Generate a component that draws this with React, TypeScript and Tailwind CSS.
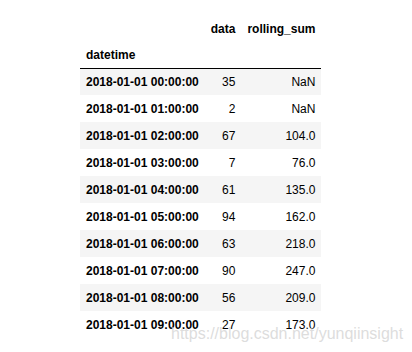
import React from 'react';

const rows: [string, string, string][] = [
  ['2018-01-01 00:00:00', '35', 'NaN'],
  ['2018-01-01 01:00:00', '2', 'NaN'],
  ['2018-01-01 02:00:00', '67', '104.0'],
  ['2018-01-01 03:00:00', '7', '76.0'],
  ['2018-01-01 04:00:00', '61', '135.0'],
  ['2018-01-01 05:00:00', '94', '162.0'],
  ['2018-01-01 06:00:00', '63', '218.0'],
  ['2018-01-01 07:00:00', '90', '247.0'],
  ['2018-01-01 08:00:00', '56', '209.0'],
  ['2018-01-01 09:00:00', '27', '173.0'],
];

const App: React.FC = () => {
  return (
    <div className="relative w-[412px] h-[352px] bg-white overflow-hidden font-['Liberation_Sans',Arial,sans-serif] text-black text-[12px]">
      <div className="pt-[15px] pl-[80px]">
        <table className="border-collapse">
          <thead className="border-b border-black">
            <tr className="h-[27px]">
              <th className="px-[6px]"></th>
              <th className="px-[6px] text-right font-bold">data</th>
              <th className="px-[6px] text-right font-bold">rolling_sum</th>
            </tr>
            <tr className="h-[26px]">
              <th className="px-[6px] text-left font-bold">datetime</th>
              <th className="px-[6px]"></th>
              <th className="px-[6px]"></th>
            </tr>
          </thead>
          <tbody>
            {rows.map(([dt, data, sum], i) => (
              <tr key={dt} className={i % 2 === 0 ? 'h-[27px] bg-[#f5f5f5]' : 'h-[27px]'}>
                <th className="px-[6px] text-left font-bold whitespace-nowrap">{dt}</th>
                <td className="px-[6px] text-right">{data}</td>
                <td className="px-[6px] text-right">{sum}</td>
              </tr>
            ))}
          </tbody>
        </table>
      </div>
      {/* csdn watermark */}
      <div className="absolute left-[171px] top-[324px] text-[16px] leading-[19px] text-[#d4d4d4]/80 whitespace-nowrap">
        https://blog.csdn.net/yunqiinsight
      </div>
    </div>
  );
};

export default App;
